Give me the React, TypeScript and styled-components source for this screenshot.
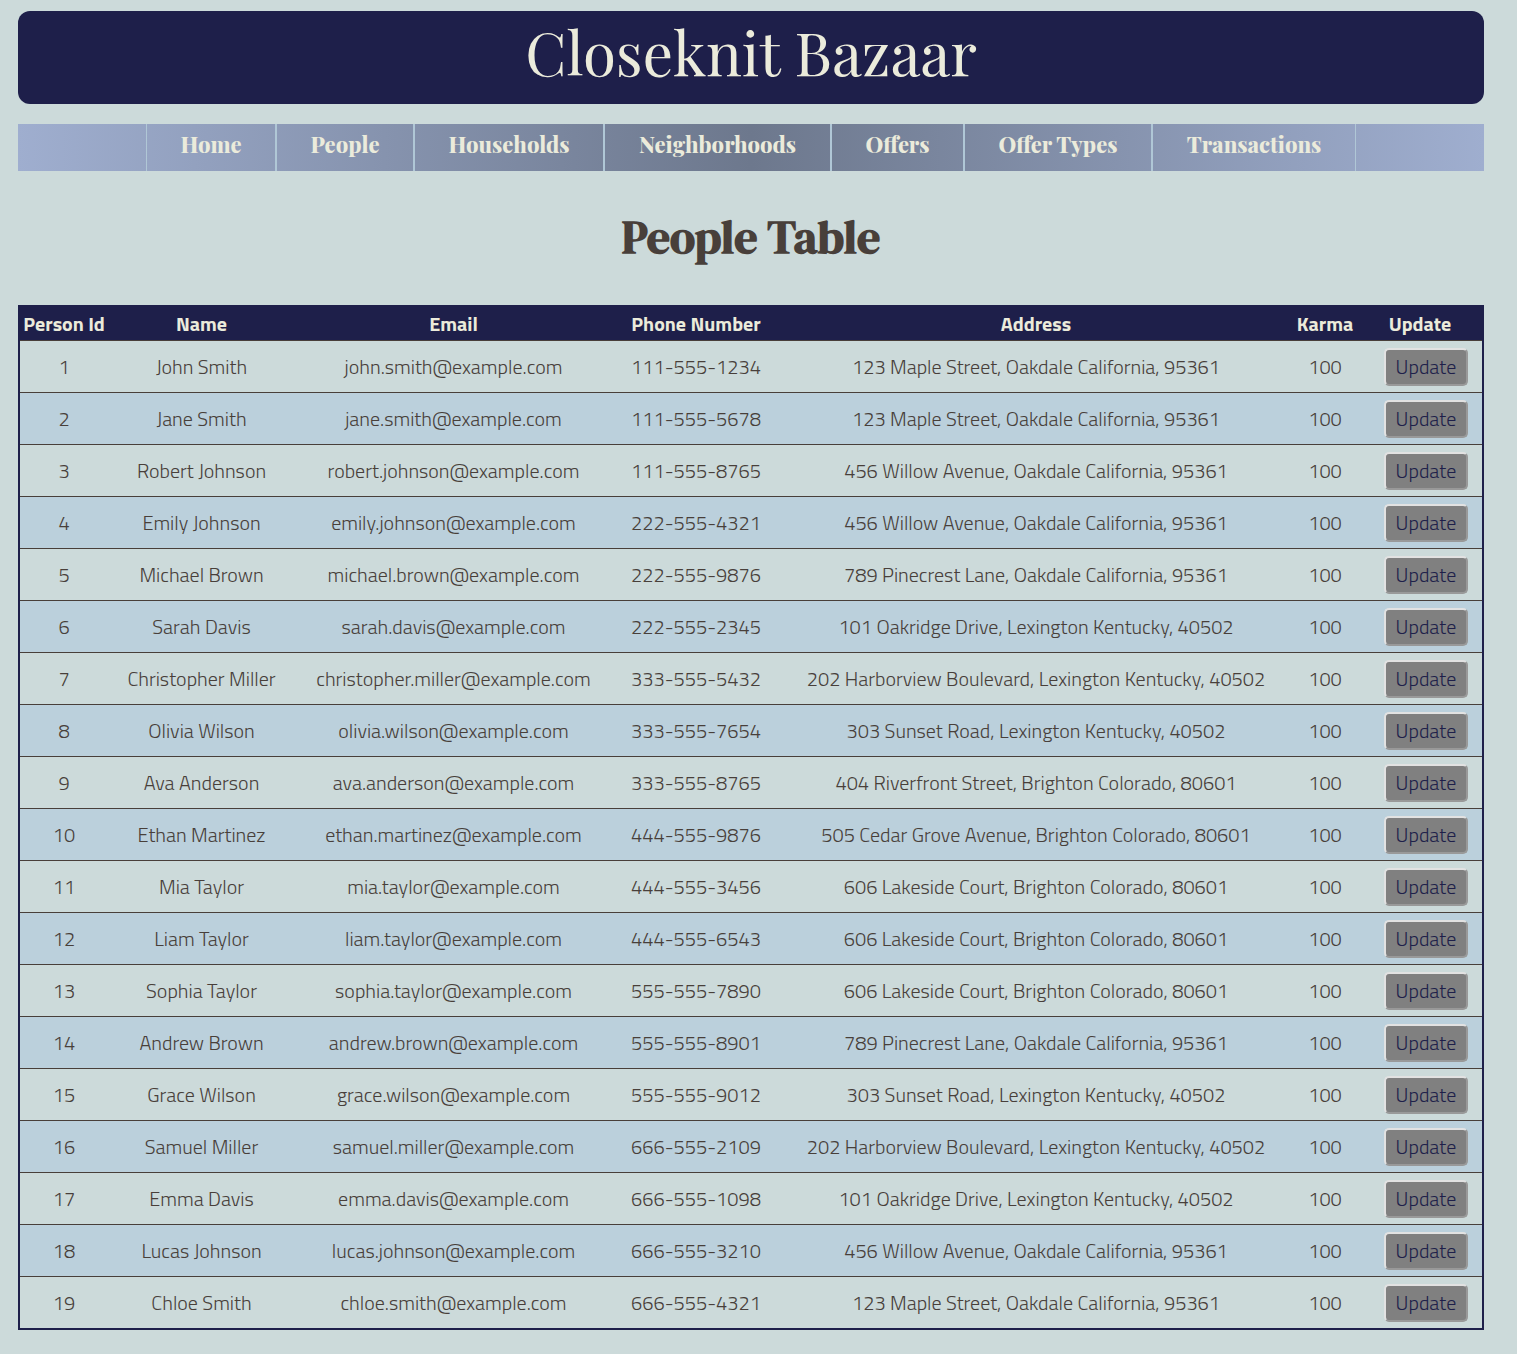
import React from "react";
import styled, { createGlobalStyle } from "styled-components";

const navy = "#1e1f4a";
const cream = "#ebebdb";
const ink = "#483f3a";
const display = `"Playfair Display", "Liberation Serif", serif`;
const heading = `"DM Serif Display", "Liberation Serif", serif`;
const sans = `"Titillium Web", Roboto, sans-serif`;

const GlobalStyle = createGlobalStyle`
  *, *::before, *::after { box-sizing: border-box; }
  body {
    margin: 0;
    background: #ccdada;
    color: ${ink};
    font: 300 20px/32px ${sans};
  }
`;

const Page = styled.div`
  padding: 11px 33px 24px 18px;
`;

const Banner = styled.header`
  padding: 0 16px 13px;
  border-radius: 12px;
  background: ${navy};
  color: ${cream};
  font: 400 60px/80px ${display};
  text-align: center;
`;

const Nav = styled.nav`
  display: flex;
  justify-content: center;
  margin-top: 20px;
  background: linear-gradient(90deg, #9faecf, #6d788d 50%, #9faecf);
`;

const NavLink = styled.a<{ $width: number }>`
  width: ${(p) => p.$width}px;
  padding: 4px 0 11px;
  border: solid #b0c7d6;
  border-width: 0 1px;
  color: ${cream};
  font: 800 22px/32px ${display};
  text-align: center;
  text-decoration: none;
  white-space: nowrap;
`;

const Heading = styled.h1`
  margin: 34px 0 36px;
  font: 700 46px/64px ${heading};
  text-align: center;
`;

const Table = styled.table`
  width: 100%;
  table-layout: fixed;
  border: 2px solid ${navy};
  border-collapse: separate;
  border-spacing: 0;
  text-align: center;
  white-space: nowrap;
`;

const HeadCell = styled.th`
  height: 34px;
  padding: 0;
  border-bottom: 1px solid ${ink};
  background: ${navy};
  color: ${cream};
  font-weight: 700;
`;

const Row = styled.tr`
  &:nth-child(even) { background: #bbd0dc; }
  &:last-child td { height: 51px; border-bottom: 0; }
`;

const Cell = styled.td`
  height: 52px;
  padding: 0;
  border-bottom: 1px solid ${ink};
`;

const ActionCell = styled(Cell)`
  padding-left: 12px;
`;

const UpdateButton = styled.button`
  display: block;
  width: 84px;
  height: 38px;
  margin: 0 auto;
  padding: 0;
  border: 2px solid;
  border-color: #e2e2e2 #999 #999 #e2e2e2;
  border-radius: 5px;
  background: #808080;
  color: ${navy};
  font: inherit;
  cursor: pointer;
`;

const links: [string, number][] = [
  ["Home", 130],
  ["People", 138],
  ["Households", 190],
  ["Neighborhoods", 227],
  ["Offers", 133],
  ["Offer Types", 188],
  ["Transactions", 204],
];

const columns: [string, number | undefined][] = [
  ["Person Id", 88],
  ["Name", 187],
  ["Email", 317],
  ["Phone Number", 168],
  ["Address", undefined],
  ["Karma", 66],
  ["Update", 124],
];

const addresses = {
  maple: "123 Maple Street, Oakdale California, 95361",
  willow: "456 Willow Avenue, Oakdale California, 95361",
  pinecrest: "789 Pinecrest Lane, Oakdale California, 95361",
  oakridge: "101 Oakridge Drive, Lexington Kentucky, 40502",
  harborview: "202 Harborview Boulevard, Lexington Kentucky, 40502",
  sunset: "303 Sunset Road, Lexington Kentucky, 40502",
  riverfront: "404 Riverfront Street, Brighton Colorado, 80601",
  cedar: "505 Cedar Grove Avenue, Brighton Colorado, 80601",
  lakeside: "606 Lakeside Court, Brighton Colorado, 80601",
};

const people: [string, string, keyof typeof addresses][] = [
  ["John Smith", "111-555-1234", "maple"],
  ["Jane Smith", "111-555-5678", "maple"],
  ["Robert Johnson", "111-555-8765", "willow"],
  ["Emily Johnson", "222-555-4321", "willow"],
  ["Michael Brown", "222-555-9876", "pinecrest"],
  ["Sarah Davis", "222-555-2345", "oakridge"],
  ["Christopher Miller", "333-555-5432", "harborview"],
  ["Olivia Wilson", "333-555-7654", "sunset"],
  ["Ava Anderson", "333-555-8765", "riverfront"],
  ["Ethan Martinez", "444-555-9876", "cedar"],
  ["Mia Taylor", "444-555-3456", "lakeside"],
  ["Liam Taylor", "444-555-6543", "lakeside"],
  ["Sophia Taylor", "555-555-7890", "lakeside"],
  ["Andrew Brown", "555-555-8901", "pinecrest"],
  ["Grace Wilson", "555-555-9012", "sunset"],
  ["Samuel Miller", "666-555-2109", "harborview"],
  ["Emma Davis", "666-555-1098", "oakridge"],
  ["Lucas Johnson", "666-555-3210", "willow"],
  ["Chloe Smith", "666-555-4321", "maple"],
];

const emailFor = (name: string) =>
  `${name.toLowerCase().replace(" ", ".")}@example.com`;

export default function App() {
  return (
    <>
      <GlobalStyle />
      <Page>
        <Banner>Closeknit Bazaar</Banner>
        <Nav>
          {links.map(([label, width]) => (
            <NavLink key={label} href="#" $width={width}>
              {label}
            </NavLink>
          ))}
        </Nav>
        <main>
          <Heading>People Table</Heading>
          <Table>
            <colgroup>
              {columns.map(([label, width]) => (
                <col key={label} width={width} />
              ))}
            </colgroup>
            <thead>
              <tr>
                {columns.map(([label]) => (
                  <HeadCell key={label} scope="col">
                    {label}
                  </HeadCell>
                ))}
              </tr>
            </thead>
            <tbody>
              {people.map(([name, phone, address], i) => (
                <Row key={name}>
                  <Cell>{i + 1}</Cell>
                  <Cell>{name}</Cell>
                  <Cell>{emailFor(name)}</Cell>
                  <Cell>{phone}</Cell>
                  <Cell>{addresses[address]}</Cell>
                  <Cell>100</Cell>
                  <ActionCell>
                    <UpdateButton type="button">Update</UpdateButton>
                  </ActionCell>
                </Row>
              ))}
            </tbody>
          </Table>
        </main>
      </Page>
    </>
  );
}
